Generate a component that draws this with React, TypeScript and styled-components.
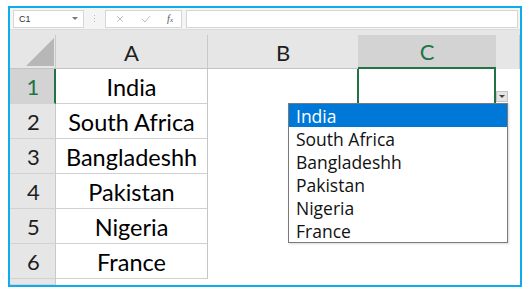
import React from 'react'
import styled, { createGlobalStyle } from 'styled-components'

const GlobalStyle = createGlobalStyle`
  html, body {
    margin: 0;
    padding: 0;
    background: #ffffff;
  }
`

const countries = ['India', 'South Africa', 'Bangladeshh', 'Pakistan', 'Nigeria', 'France']

const excelGreen = '#217346'

const Frame = styled.div`
  position: relative;
  margin: 6px 0 0 8px;
  width: 514px;
  height: 281px;
  box-sizing: border-box;
  border: 2px solid #0eacea;
  display: flex;
  flex-direction: column;
  overflow: hidden;
  background: #ffffff;
`

const Toolbar = styled.div`
  height: 21px;
  flex: none;
  display: flex;
  align-items: center;
  padding-left: 3px;
  padding-right: 2px;
  background: #f4f4f4;
  border-bottom: 1px solid #dcdcdc;
`

const ToolbarGap = styled.div`
  height: 5px;
  flex: none;
  background: #e6e6e6;
`

const NameBox = styled.div`
  width: 71px;
  height: 18px;
  box-sizing: border-box;
  border: 1px solid #d6d6d6;
  background: #ffffff;
  display: flex;
  align-items: center;
  justify-content: space-between;
  padding: 0 5px 0 5px;
  font-family: 'Liberation Sans', Arial, sans-serif;
  font-size: 9px;
  color: #333333;
`

const Caret = styled.span`
  width: 0;
  height: 0;
  border-left: 3px solid transparent;
  border-right: 3px solid transparent;
  border-top: 3px solid #777777;
`

const Dots = styled.div`
  width: 21px;
  display: flex;
  flex-direction: column;
  align-items: center;
  gap: 2px;

  span {
    width: 1px;
    height: 1px;
    background: #b9b9b9;
  }
`

const FxBox = styled.div`
  width: 77px;
  height: 18px;
  box-sizing: border-box;
  border: 1px solid #d6d6d6;
  background: #ffffff;
  display: flex;
  align-items: center;
  justify-content: space-between;
  padding: 0 8px 0 10px;
`

const FxLabel = styled.span`
  font-family: 'Liberation Serif', 'Times New Roman', serif;
  font-style: italic;
  font-size: 10px;
  color: #555555;

  small {
    font-size: 7px;
  }
`

const FormulaInput = styled.div`
  flex: 1;
  height: 18px;
  margin-left: 4px;
  box-sizing: border-box;
  border: 1px solid #d6d6d6;
  background: #ffffff;
`

const Sheet = styled.div`
  flex: 1;
  display: grid;
  grid-template-columns: 46px 152px 150px 138px 1fr;
  grid-template-rows: 34px repeat(6, 35px) 1fr;
  font-family: Lato, 'Open Sans', sans-serif;
`

const Corner = styled.div`
  background: #e6e6e6;
  border-right: 1px solid #c9c9c9;
  border-bottom: 1px solid #c3c3c3;
  display: flex;
  align-items: flex-end;
  justify-content: flex-end;
  padding: 0 1px 2px 0;
`

const ColHeader = styled.div<{ $active?: boolean; $edge?: boolean }>`
  background: ${p => (p.$active ? '#d3d3d3' : '#e6e6e6')};
  border-right: ${p => (p.$edge ? '1px solid #c9c9c9' : 'none')};
  border-bottom: ${p => (p.$active ? `2px solid ${excelGreen}` : '1px solid #c3c3c3')};
  color: ${p => (p.$active ? excelGreen : '#1e1e1e')};
  display: flex;
  align-items: center;
  justify-content: center;
  font-size: 22px;
  padding-top: 1px;
`

const RowHeader = styled.div<{ $active?: boolean }>`
  background: ${p => (p.$active ? '#d3d3d3' : '#e6e6e6')};
  border-right: ${p => (p.$active ? `2px solid ${excelGreen}` : '1px solid #c9c9c9')};
  border-bottom: 1px solid #d2d2d2;
  color: ${p => (p.$active ? excelGreen : '#1e1e1e')};
  display: flex;
  align-items: center;
  justify-content: center;
  font-size: 22px;
  padding: 1px 0 0 2px;
`

const FillerHeader = styled.div`
  background: #e6e6e6;
  border-right: 1px solid #c9c9c9;
`

const DataCell = styled.div`
  border-right: 1px solid #c6c6c6;
  border-bottom: 1px solid #d0d0d0;
  display: flex;
  align-items: center;
  justify-content: center;
  font-size: 23.5px;
  padding-top: 1px;
  color: #000000;
`

const BlankCell = styled.div``

const SelectedCell = styled.div`
  position: relative;
  border-left: 2px solid ${excelGreen};
  border-right: 2px solid ${excelGreen};
  margin-left: -1px;
`

const DropButton = styled.div`
  position: absolute;
  right: -14px;
  bottom: 2px;
  width: 12px;
  height: 11px;
  box-sizing: border-box;
  background: #e4e4e4;
  border: 1px solid #c4c4c4;
  display: flex;
  align-items: center;
  justify-content: center;
`

const DropCaret = styled.span`
  width: 0;
  height: 0;
  border-left: 3px solid transparent;
  border-right: 3px solid transparent;
  border-top: 3px solid #444444;
`

const List = styled.div`
  position: absolute;
  top: 34px;
  right: -14px;
  width: 220px;
  box-sizing: border-box;
  border: 1px solid #7a7a7a;
  background: #ffffff;
  box-shadow: 1px 1px 2px rgba(0, 0, 0, 0.15);
  z-index: 2;
  font-family: 'Open Sans', 'Noto Sans', sans-serif;
`

const ListItem = styled.div<{ $selected?: boolean }>`
  height: 23px;
  line-height: 24px;
  padding-left: 7px;
  font-size: 17.5px;
  background: ${p => (p.$selected ? '#0078d7' : 'transparent')};
  color: ${p => (p.$selected ? '#ffffff' : '#111111')};
`

const App: React.FC = () => {
  return (
    <>
      <GlobalStyle />
      <Frame>
        <Toolbar>
          <NameBox>
            C1
            <Caret />
          </NameBox>
          <Dots>
            <span />
            <span />
            <span />
          </Dots>
          <FxBox>
            <svg width="8" height="8" viewBox="0 0 8 8">
              <path d="M1 1 L7 7 M7 1 L1 7" stroke="#c0c0c0" strokeWidth="1" />
            </svg>
            <svg width="10" height="8" viewBox="0 0 10 8">
              <path d="M1 4 L4 7 L9 1" stroke="#c0c0c0" strokeWidth="1" fill="none" />
            </svg>
            <FxLabel>
              f<small>x</small>
            </FxLabel>
          </FxBox>
          <FormulaInput />
        </Toolbar>
        <ToolbarGap />
        <Sheet>
          <Corner>
            <svg width="28" height="28" viewBox="0 0 28 28">
              <polygon points="0,28 28,0 28,28" fill="#b7b7b7" />
            </svg>
          </Corner>
          <ColHeader $edge>A</ColHeader>
          <ColHeader>B</ColHeader>
          <ColHeader $active>C</ColHeader>
          <FillerHeader />

          {countries.map((name, i) => (
            <React.Fragment key={name}>
              <RowHeader $active={i === 0}>{i + 1}</RowHeader>
              <DataCell>{name}</DataCell>
              <BlankCell />
              {i === 0 ? (
                <SelectedCell>
                  <DropButton>
                    <DropCaret />
                  </DropButton>
                  <List>
                    {countries.map((item, j) => (
                      <ListItem key={item} $selected={j === 0}>
                        {item}
                      </ListItem>
                    ))}
                  </List>
                </SelectedCell>
              ) : (
                <BlankCell />
              )}
              <BlankCell />
            </React.Fragment>
          ))}

          <RowHeader />
          <BlankCell />
        </Sheet>
      </Frame>
    </>
  )
}

export default App
